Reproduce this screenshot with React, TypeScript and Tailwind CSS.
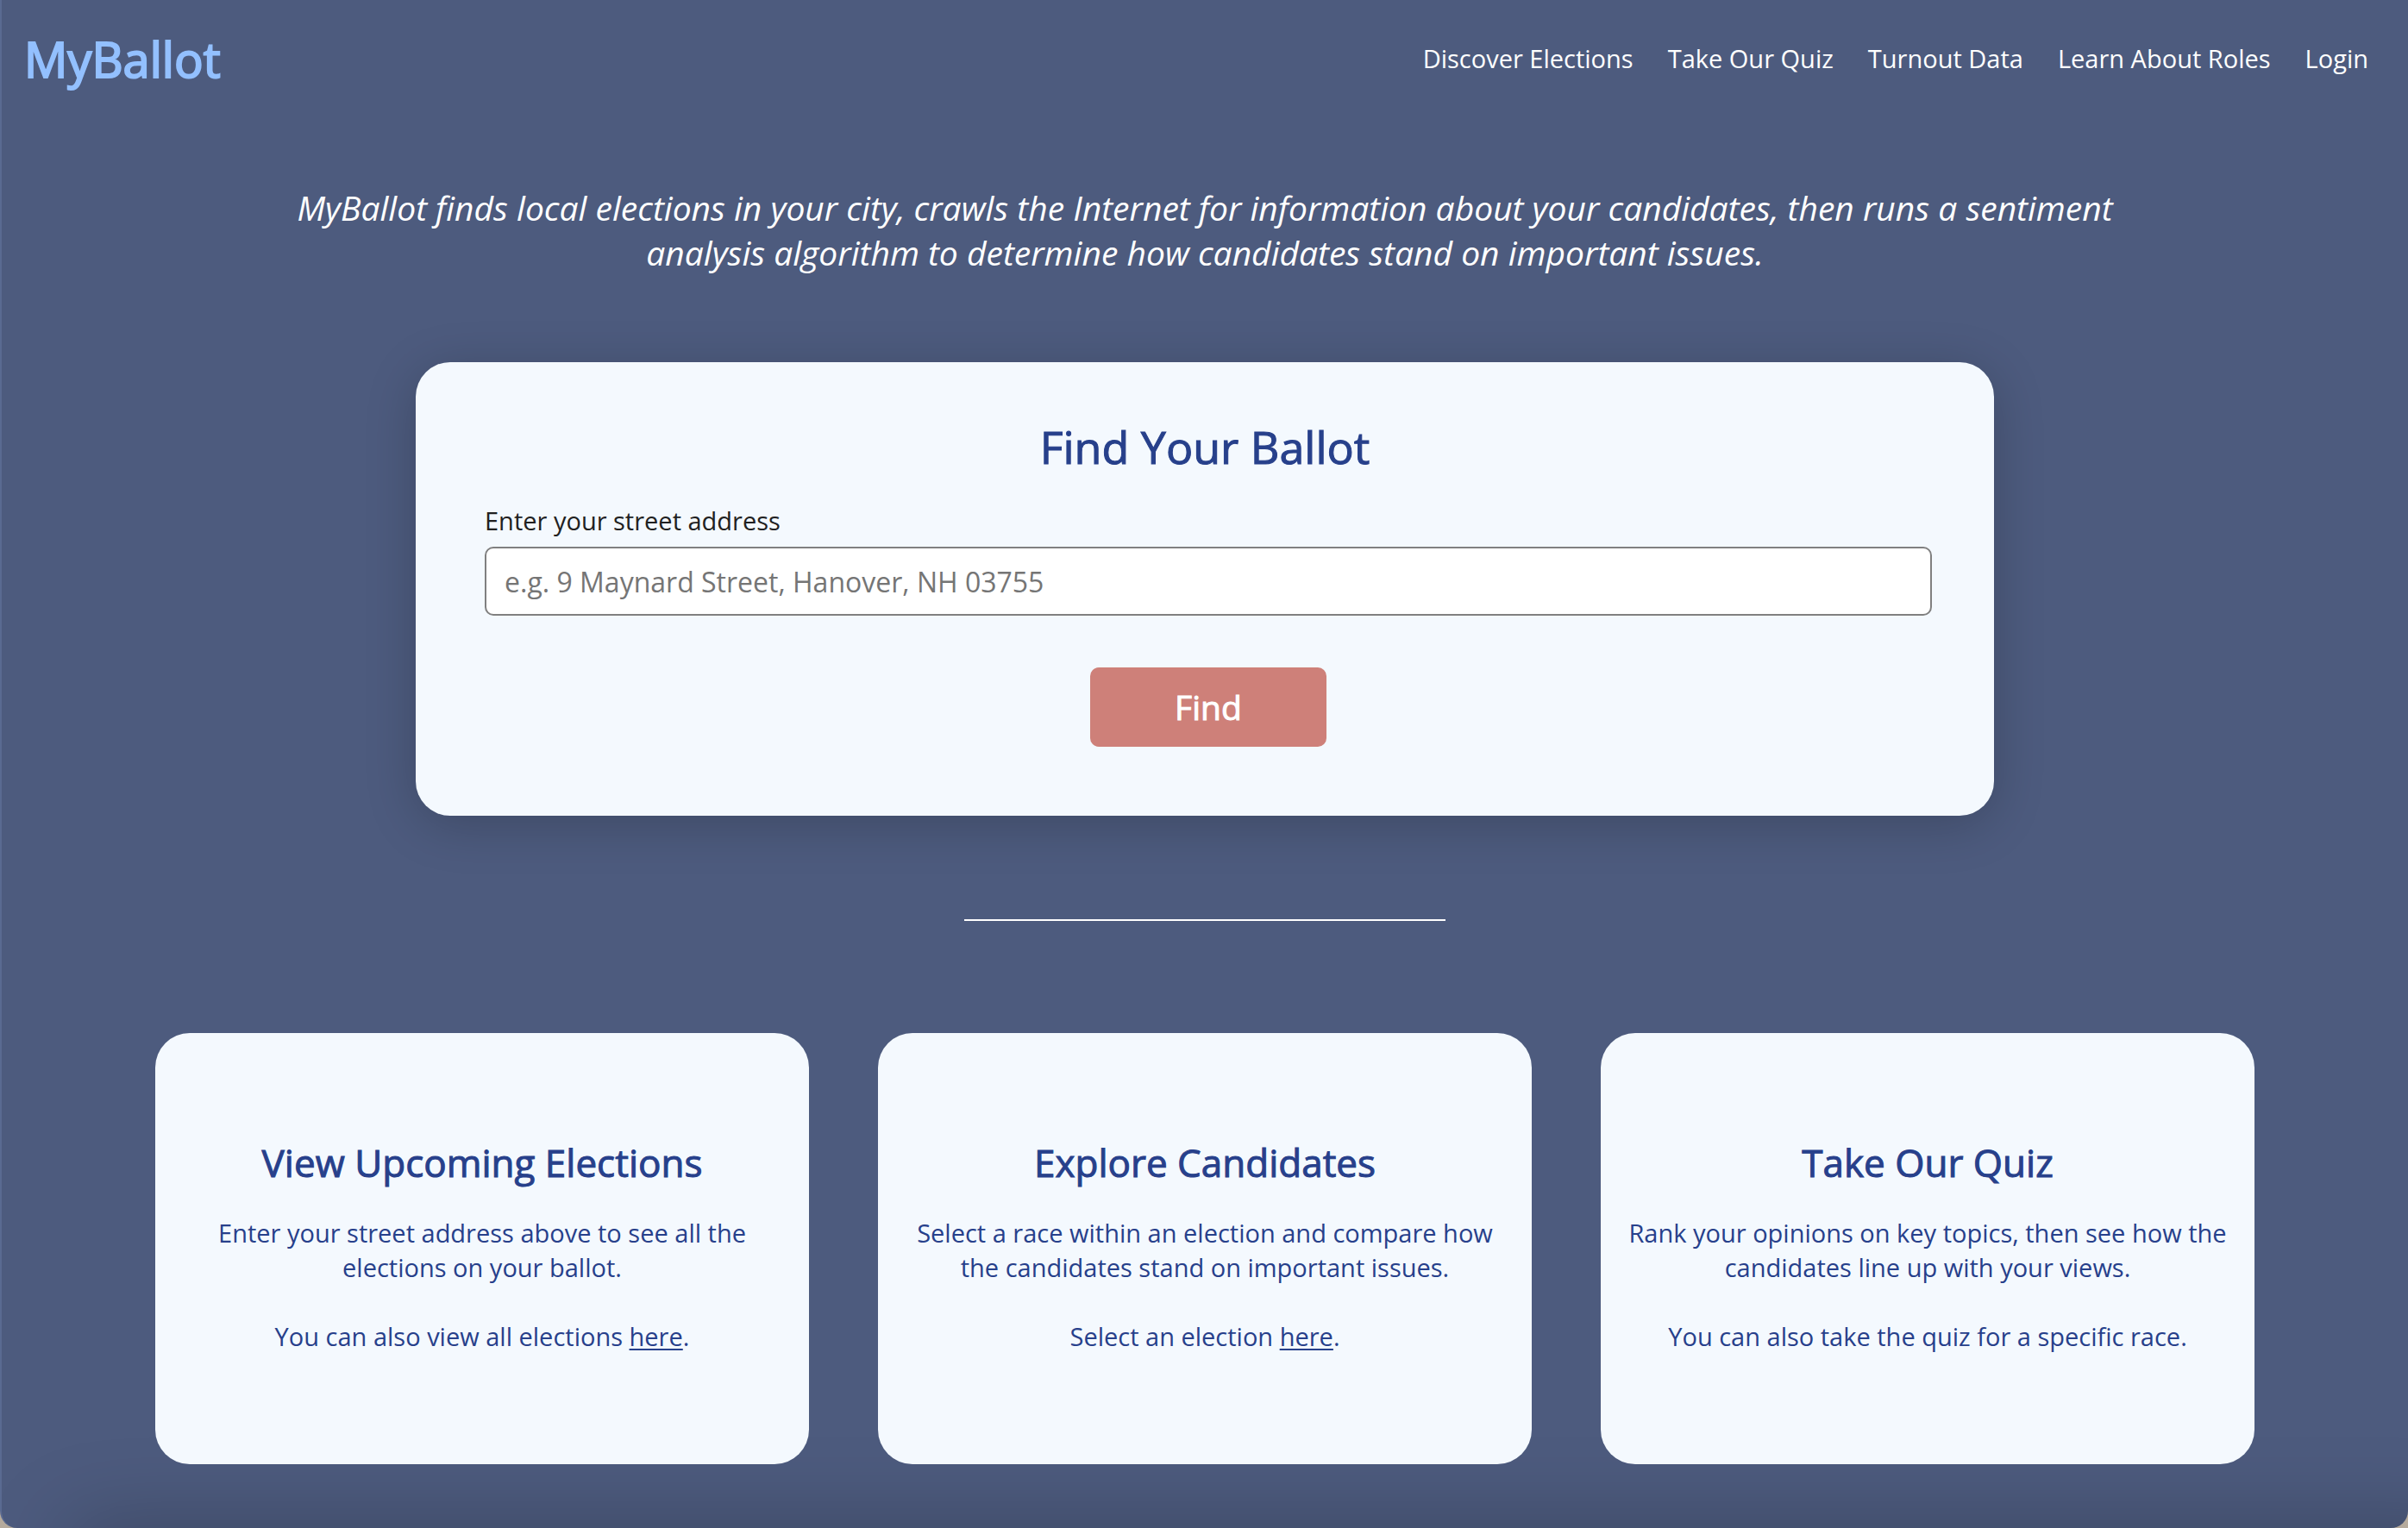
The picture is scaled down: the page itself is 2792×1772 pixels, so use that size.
import type { ReactNode } from "react";

const navItems = ["Discover Elections", "Take Our Quiz", "Turnout Data", "Learn About Roles", "Login"];

function HereLink() {
  return (
    <a href="#elections" className="underline decoration-2 underline-offset-3">
      here
    </a>
  );
}

function InfoCard({ title, text, children }: { title: string; text: string; children: ReactNode }) {
  return (
    <section className="flex min-h-[500px] flex-1 flex-col items-center rounded-[40px] bg-[#f4f9fe] px-6 pt-[120px] pb-20 text-center text-[#27408b]">
      <h2 className="text-[44px] leading-[60px] [-webkit-text-stroke:1px]">{title}</h2>
      <p className="mt-8 text-[29px] leading-10">{text}</p>
      <p className="mt-10 text-[29px] leading-10">{children}</p>
    </section>
  );
}

export default function App() {
  return (
    <div className="min-h-screen bg-[#b5aa9c]">
      <div className="relative flex min-h-screen flex-col overflow-hidden rounded-b-[20px] border-l-2 border-[#5a6a91] bg-[#4d5b7e] font-['Open_Sans','Noto_Sans',sans-serif] text-white">
        <div className="absolute top-full -right-20 left-20 h-20 shadow-[0_0_100px_rgba(0,0,0,0.25)]" />
        <header className="flex h-[136px] items-center justify-between pr-[46px] pl-[26px]">
          <a href="#home" className="text-[56px] text-[#93c0ff] [-webkit-text-stroke:2px]">
            MyBallot
          </a>
          <nav className="flex gap-10 text-[29px]">
            {navItems.map((item) => (
              <a key={item} href="#nav">
                {item}
              </a>
            ))}
          </nav>
        </header>

        <main className="relative flex flex-col items-center">
          <p className="mt-[79px] w-4/5 text-center text-[39px] leading-[52px] italic">
            MyBallot finds local elections in your city, crawls the Internet for information about your candidates, then
            runs a sentiment analysis algorithm to determine how candidates stand on important issues.
          </p>

          <section className="mt-[101px] w-full max-w-[1830px] rounded-[40px] bg-[#f4f9fe] pt-[62px] pb-20 shadow-[0_10px_60px_rgba(0,0,0,0.2)]">
            <h1 className="text-center text-[52px] leading-[72px] text-[#27408b] [-webkit-text-stroke:1px]">
              Find Your Ballot
            </h1>
            <form className="flex flex-col pt-[30px] pr-[72px] pl-20" onSubmit={(e) => e.preventDefault()}>
              <label htmlFor="address" className="text-[29px] leading-10 text-[#212121]">
                Enter your street address
              </label>
              <input
                id="address"
                type="text"
                placeholder="e.g. 9 Maynard Street, Hanover, NH 03755"
                className="mt-[10px] h-20 w-full rounded-[10px] border-2 border-[#808080] bg-white px-[21px] text-[32px] text-[#212121] placeholder:text-[#757575]"
              />
              <button
                type="submit"
                className="mt-[60px] h-[92px] w-[274px] self-center rounded-[10px] bg-[#ce8079] text-[39px] text-white [-webkit-text-stroke:1px]"
              >
                Find
              </button>
            </form>
          </section>

          <hr className="mt-[120px] w-1/5 border-t-2 border-white" />

          <div className="mt-[130px] flex w-full max-w-[2434px] gap-20">
            <InfoCard title="View Upcoming Elections" text="Enter your street address above to see all the elections on your ballot.">
              You can also view all elections <HereLink />.
            </InfoCard>
            <InfoCard
              title="Explore Candidates"
              text="Select a race within an election and compare how the candidates stand on important issues."
            >
              Select an election <HereLink />.
            </InfoCard>
            <InfoCard
              title="Take Our Quiz"
              text="Rank your opinions on key topics, then see how the candidates line up with your views."
            >
              You can also take the quiz for a specific race.
            </InfoCard>
          </div>
        </main>
      </div>
    </div>
  );
}
